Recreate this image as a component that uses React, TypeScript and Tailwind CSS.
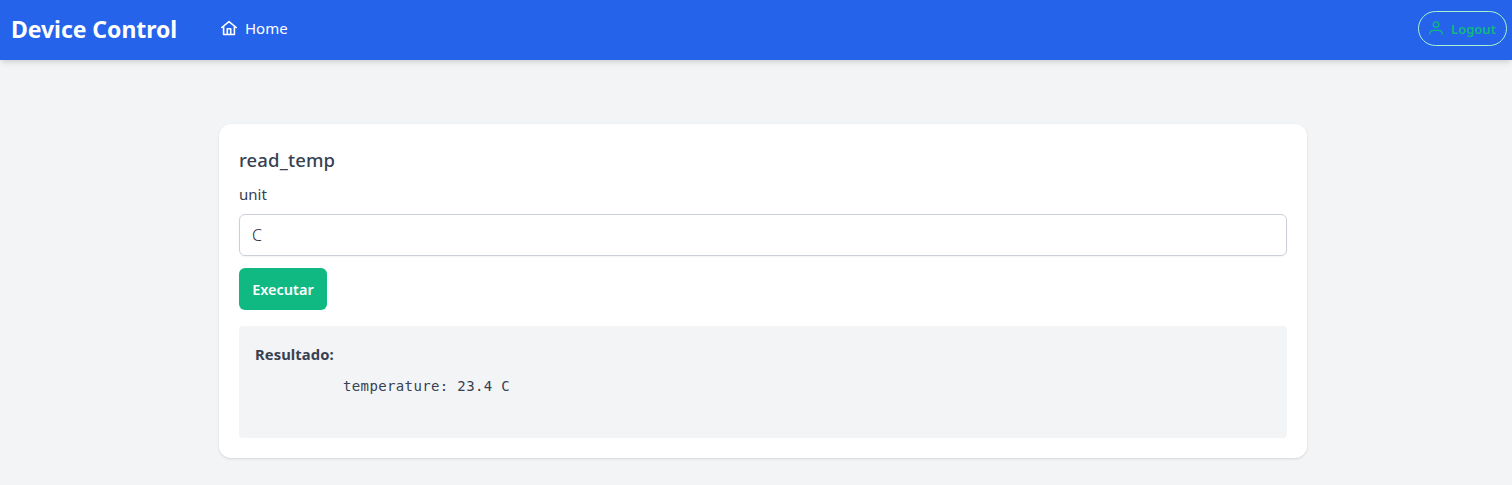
import React from "react";

function HomeIcon() {
  return (
    <svg className="mb-px h-[16px] w-[16px] shrink-0" viewBox="0 0 16 16" fill="none" stroke="currentColor" strokeWidth="1.6" strokeLinejoin="round" strokeLinecap="round">
      <path d="M0.8 7.5 8 1.7l7.2 5.8M2.6 6.3v8.2h10.8V6.3M6.3 14V8.7h3.4V14" />
    </svg>
  );
}

function UserIcon() {
  return (
    <svg className="mb-px h-[14px] w-[14px] shrink-0" viewBox="0 0 14 14" fill="none" stroke="currentColor" strokeWidth="1.3" strokeLinecap="round" strokeLinejoin="round">
      <circle cx="7" cy="3.6" r="2.8" />
      <path d="M0.7 13.1C0.7 10.6 2.5 9.3 5 9.3h4c2.5 0 4.3 1.3 4.3 3.8" />
    </svg>
  );
}

export default function App() {
  return (
    <div className="flex h-[485px] flex-col bg-[#f3f4f6] font-['Noto_Sans',sans-serif] text-[#374151]">
      <header className="flex h-[60px] shrink-0 items-center bg-[#2563eb] pb-[3px] pl-[11px] pr-[5px] text-white shadow-md">
        <div className="w-[210px] whitespace-nowrap pt-px text-[23px] font-bold tracking-[-0.05px]">Device Control</div>
        <a className="flex items-center gap-2 text-[15px]"><HomeIcon />Home</a>
        <button className="ml-auto flex h-[35px] w-[89px] items-center justify-center gap-2 rounded-full border border-[#a7f3d0] text-[13px] font-semibold text-[#10b981]"><UserIcon /><span className="pt-[2px]">Logout</span></button>
      </header>
      <main className="ml-[219px] mt-16 w-[1088px]">
        <section className="flex h-[334px] flex-col rounded-xl bg-white p-5 shadow">
          <h2 className="mt-[2px] text-[18.5px] font-medium leading-7 tracking-[0.15px]">read_temp</h2>
          <label className="mt-[8px] text-[15px] leading-6">unit</label>
          <input defaultValue="C" className="mt-2 h-[42px] shrink-0 rounded-md border border-[#cbd0d8] px-3 text-[16px] font-light text-[#1f2937] shadow-xs" />
          <button className="mt-3 h-[42px] w-[88px] shrink-0 rounded-md bg-[#10b981] pt-[2px] text-[14.5px] font-semibold text-white">Executar</button>
          <div className="mt-4 h-[112px] shrink-0 rounded bg-[#f3f4f6] p-4">
            <strong className="block text-[14.75px] font-bold leading-6 tracking-[0.1px]">Resultado:</strong>
            <pre className="mt-2 font-['DejaVu_Sans_Mono',monospace] text-[14px] leading-6 tracking-[0.37px]">{"          temperature: 23.4 C"}</pre>
          </div>
        </section>
      </main>
    </div>
  );
}
